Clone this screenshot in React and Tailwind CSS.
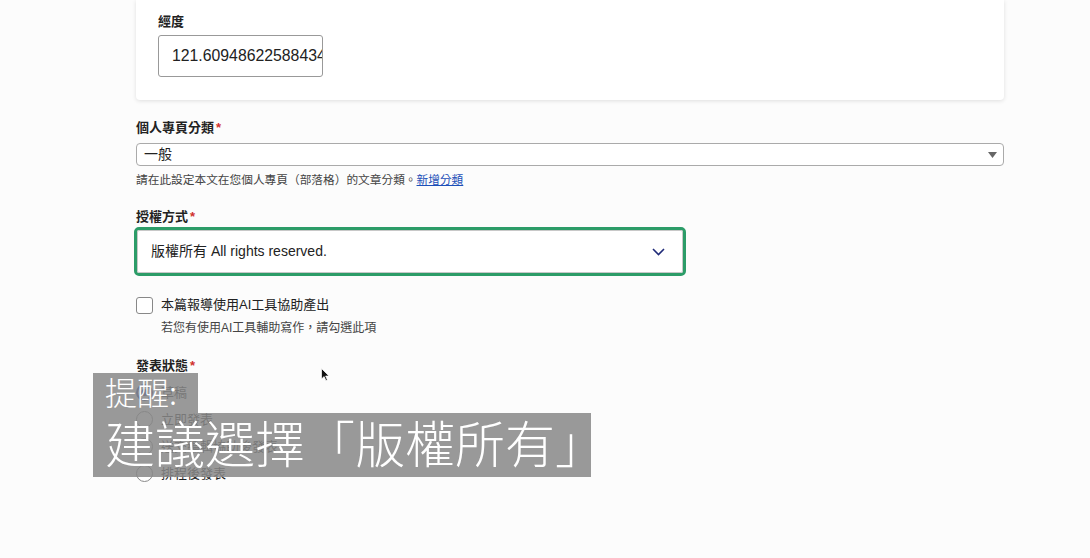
import { useState } from "react";

const font = { fontFamily: '"Liberation Sans", "Noto Sans CJK TC", sans-serif' };

// 必填欄位的標籤
function FieldLabel({ children }) {
  return (
    <div className="text-[13px] leading-[18px] font-bold text-[#222]">
      {children}
      <span className="text-[#d0312d] ml-0.5">*</span>
    </div>
  );
}

function Radio({ label, checked }) {
  return (
    <div className="flex items-center h-[27px] gap-2">
      {checked ? (
        <span className="w-[17px] h-[17px] rounded-full border-2 border-[#1d3aa0] flex items-center justify-center">
          <span className="w-[7px] h-[7px] rounded-full bg-[#1d3aa0]" />
        </span>
      ) : (
        <span className="w-[17px] h-[17px] rounded-full border border-[#888] bg-white" />
      )}
      <span className="text-[13px] text-[#222]">{label}</span>
    </div>
  );
}

export default function App() {
  const [aiUsed, setAiUsed] = useState(false);

  return (
    <div className="relative w-[1090px] h-[558px] overflow-hidden bg-[#fcfcfc]" style={font}>
      <div className="ml-[136px] w-[868px]">
        {/* 座標卡片 */}
        <div className="bg-white shadow-[0_1px_4px_rgba(0,0,0,0.12)] rounded-b-sm pl-[22px] pt-[13px] pb-[23px]">
          <div className="text-[13px] leading-[18px] font-bold text-[#222]">經度</div>
          <div className="mt-[4px] w-[165px] h-[42px] border border-[#999] rounded-[3px] bg-white flex items-center pl-[13px] pr-[2px] overflow-hidden">
            <span className="text-[15.8px] text-[#222] whitespace-nowrap">121.60948622588434</span>
          </div>
        </div>

        {/* 個人專頁分類 */}
        <div className="mt-[19px]">
          <FieldLabel>個人專頁分類</FieldLabel>
          <div className="mt-[6px] h-[23px] border border-[#aaa] rounded-[4px] bg-white flex items-center justify-between pl-[7px] pr-[6px]">
            <span className="text-[14px] text-[#222]">一般</span>
            <svg width="9" height="6" viewBox="0 0 9 6">
              <path d="M0 0h9L4.5 6z" fill="#666" />
            </svg>
          </div>
          <div className="mt-[6px] text-[11.7px] leading-[16px] text-[#444]">
            請在此設定本文在您個人專頁（部落格）的文章分類。
            <a href="#" className="text-[#1b4fb8] underline">新增分類</a>
          </div>
        </div>

        {/* 授權方式 */}
        <div className="mt-[20px]">
          <FieldLabel>授權方式</FieldLabel>
          <div className="mt-px -ml-[2px] w-[552px] h-[49px] border-[3px] border-[#2c9c68] rounded-[5px]">
            <div className="h-full border border-[#c8c8c8] rounded-[2px] bg-white flex items-center justify-between pl-[13px] pr-[17px]">
              <span className="text-[14px] text-[#222]">版權所有 All rights reserved.</span>
              <svg width="13" height="8" viewBox="0 0 13 8" fill="none">
                <path d="M1 1l5.5 5.5L12 1" stroke="#1f2a78" strokeWidth="1.6" />
              </svg>
            </div>
          </div>
        </div>

        {/* AI 工具 */}
        <div className="mt-[19px]">
          <label className="flex items-center gap-2 h-[20px] cursor-pointer">
            <input
              type="checkbox"
              checked={aiUsed}
              onChange={() => setAiUsed(!aiUsed)}
              className="appearance-none w-[17px] h-[17px] border border-[#888] rounded-[3px] bg-white checked:bg-[#1d3aa0]"
            />
            <span className="text-[13px] text-[#222]">本篇報導使用AI工具協助產出</span>
          </label>
          <div className="mt-[5px] ml-[25px] text-[12px] leading-[16px] text-[#444]">
            若您有使用AI工具輔助寫作，請勾選此項
          </div>
        </div>

        {/* 發表狀態 */}
        <div className="mt-[21px]">
          <FieldLabel>發表狀態</FieldLabel>
          <div className="mt-[4px]">
            <Radio label="草稿" checked />
            <Radio label="立即發表" />
            <Radio label="送交編輯協助後發表" />
            <Radio label="排程後發表" />
          </div>
        </div>
      </div>

      {/* 滑鼠游標 */}
      <svg className="absolute left-[321px] top-[368px]" width="9" height="13" viewBox="0 0 9 13">
        <path d="M0.5 0.5v10.5l2.6-2.4 1.8 4 1.5-0.7-1.8-3.9h3.4z" fill="#111" stroke="#fff" strokeWidth="0.7" />
      </svg>

      {/* 影片字幕 */}
      <div className="absolute left-[93px] top-[373px] flex flex-col items-start text-white font-light" style={{ fontFamily: '"Noto Sans CJK TC", sans-serif' }}>
        <div className="h-[40px] w-[105px] bg-[#878787]/85 text-[32px] leading-[36px] pl-[12px]">提醒:</div>
        <div className="h-[64px] w-[498px] bg-[#878787]/85 text-[50px] leading-[57px] pl-[12px] whitespace-nowrap">建議選擇「版權所有」</div>
      </div>
    </div>
  );
}
